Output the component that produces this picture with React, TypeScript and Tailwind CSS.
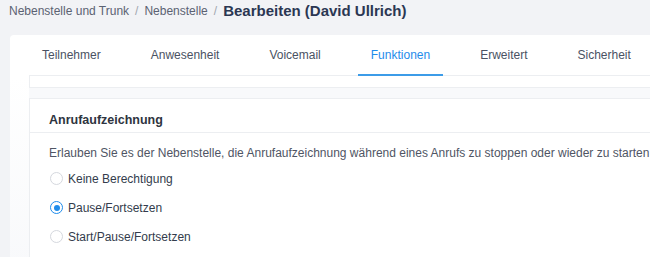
const tabs = ['Teilnehmer', 'Anwesenheit', 'Voicemail', 'Funktionen', 'Erweitert', 'Sicherheit'];
const options = ['Keine Berechtigung', 'Pause/Fortsetzen', 'Start/Pause/Fortsetzen'];

function Radio({ checked }: { checked?: boolean }) {
  return (
    <span
      className={
        checked
          ? 'flex h-[13px] w-[13px] items-center justify-center rounded-full border border-[#1f8ceb] bg-white'
          : 'h-[13px] w-[13px] rounded-full border border-[#d5d8de] bg-white'
      }
    >
      {checked && <span className="h-[6px] w-[6px] rounded-full bg-[#1f8ceb]" />}
    </span>
  );
}

export default function App() {
  return (
    <div className="h-[257px] w-[650px] overflow-hidden bg-[#f2f3f6] font-['Liberation_Sans',Arial,sans-serif]">
      <div className="flex items-center pl-[9px] pt-[2px] leading-[18px]">
        <span className="text-[12px] text-[#5b6272]">Nebenstelle und Trunk</span>
        <span className="px-[6px] text-[12px] text-[#a0a5ae]">/</span>
        <span className="text-[12px] text-[#5b6272]">Nebenstelle</span>
        <span className="px-[6px] text-[12px] text-[#a0a5ae]">/</span>
        <span className="text-[15px] font-bold text-[#2b3753]">Bearbeiten (David Ullrich)</span>
      </div>

      <div className="ml-[10px] mt-[15px] w-[700px] rounded-tl-sm bg-white">
        <div className="pl-[19px]">
          <div className="flex h-[41px] gap-[24px] border-b border-[#eceef1]">
            {tabs.map((t) => {
              const active = t === 'Funktionen';
              return (
                <div
                  key={t}
                  className={
                    active
                      ? 'relative flex items-center px-[13px] text-[12px] text-[#1f8ceb]'
                      : 'relative flex items-center px-[13px] text-[12px] text-[#4a5263]'
                  }
                >
                  {t}
                  {active && <span className="absolute bottom-[-1px] left-0 right-0 h-[2px] bg-[#3c9ce8]" />}
                </div>
              );
            })}
          </div>
        </div>

        <div className="bg-gradient-to-b from-white to-[#f8f9fb] pl-[19px]">
          <div className="bg-[#f8f9fb]">
            <div className="h-[12px] border border-t-0 border-[#eceef1] bg-white" />
            <div className="h-[10px]" />
            <div className="border border-[#eceef1] bg-white">
              <div className="h-[34px] border-b border-[#eceef1] pl-[19px] pt-[13px] text-[12.5px] font-bold leading-[16px] text-[#2e3440]">
                Anrufaufzeichnung
              </div>
              <div className="pl-[19px] pt-[12px] text-[12px] leading-[16px] text-[#4f5564]">
                Erlauben Sie es der Nebenstelle, die Anrufaufzeichnung während eines Anrufs zu stoppen oder wieder zu starten
              </div>
              <div className="mt-[3px] flex flex-col pl-[20px]">
                {options.map((o, i) => (
                  <div key={o} className="flex h-[29px] items-center gap-[5px]">
                    <Radio checked={i === 1} />
                    <span className="text-[12px] text-[#333c4c]">{o}</span>
                  </div>
                ))}
              </div>
              <div className="h-[20px]" />
            </div>
          </div>
        </div>
      </div>
    </div>
  );
}
